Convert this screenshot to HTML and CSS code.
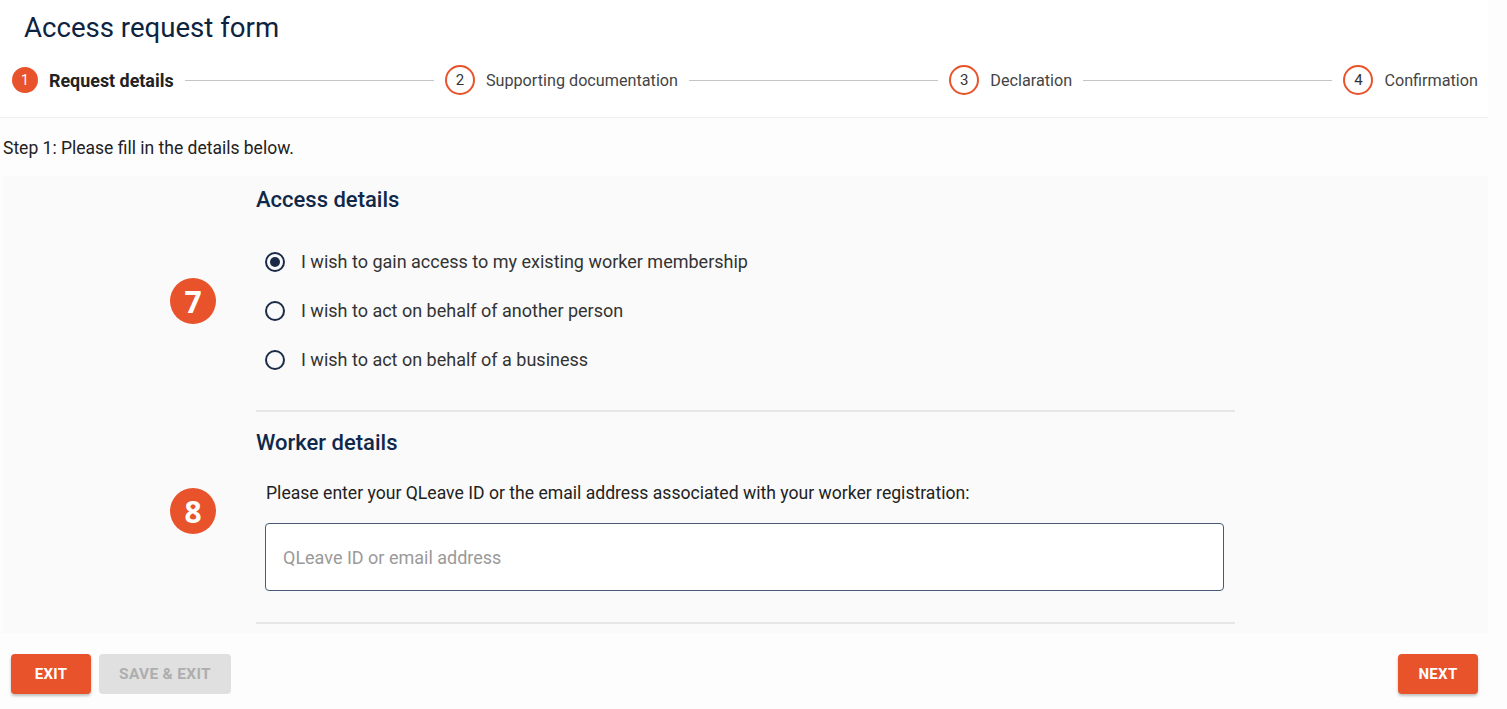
FILE: index.html
```html
<!DOCTYPE html>
<html lang="en">
<head>
<meta charset="utf-8">
<title>Access request form</title>
<link rel="stylesheet" href="styles.css">
</head>
<body>
<div class="page">
  <header class="top">
    <h1 class="title">Access request form</h1>
    <ol class="stepper">
      <li class="step active"><span class="num">1</span><span class="label">Request details</span></li>
      <li class="connector"></li>
      <li class="step"><span class="num">2</span><span class="label">Supporting documentation</span></li>
      <li class="connector"></li>
      <li class="step"><span class="num">3</span><span class="label">Declaration</span></li>
      <li class="connector"></li>
      <li class="step"><span class="num">4</span><span class="label">Confirmation</span></li>
    </ol>
  </header>

  <p class="intro">Step 1: Please fill in the details below.</p>

  <main class="form-area">
    <section class="section s-access">
      <div class="badge b7">7</div>
      <div class="content">
        <h2 class="heading">Access details</h2>
        <div class="radios">
          <label class="radio"><span class="dot checked"></span><span>I wish to gain access to my existing worker membership</span></label>
          <label class="radio"><span class="dot"></span><span>I wish to act on behalf of another person</span></label>
          <label class="radio"><span class="dot"></span><span>I wish to act on behalf of a business</span></label>
        </div>
        <hr class="divider">
      </div>
    </section>
    <section class="section s-worker">
      <div class="badge b8">8</div>
      <div class="content">
        <h2 class="heading heading2">Worker details</h2>
        <p class="hint">Please enter your QLeave ID or the email address associated with your worker registration:</p>
        <div class="input"><span class="placeholder">QLeave ID or email address</span></div>
        <hr class="divider divider2">
      </div>
    </section>
  </main>

  <footer class="actions">
    <div class="left">
      <button class="btn primary">EXIT</button>
      <button class="btn disabled">SAVE &amp; EXIT</button>
    </div>
    <button class="btn primary">NEXT</button>
  </footer>
</div>
</body>
</html>
```

FILE: styles.css
```css
* { box-sizing: border-box; }
html, body { margin: 0; padding: 0; }
body {
  background: #fdfdfd;
  font-family: Roboto, "Liberation Sans", Arial, sans-serif;
  color: #2b2b2b;
  width: 1507px;
  height: 709px;
  overflow: hidden;
}
.page { width: 1488px; }

.top {
  background: #ffffff;
  border-bottom: 1px solid #eeeeee;
  height: 118px;
  padding-top: 11px;
}
.title {
  margin: 0 0 0 24px;
  font-size: 27.6px;
  line-height: 34px;
  font-weight: 400;
  color: #0d2340;
}
.stepper {
  list-style: none;
  margin: 20px 0 0 0;
  padding: 0 10px 0 12px;
  display: flex;
  align-items: center;
  height: 30px;
}
.step {
  display: flex;
  align-items: center;
  gap: 11px;
  font-size: 16.2px;
  color: #444;
}
.step .num {
  width: 30px;
  height: 30px;
  border-radius: 50%;
  border: 2px solid #e9532b;
  display: flex;
  align-items: center;
  justify-content: center;
  font-size: 15px;
  color: #333;
}
.step.active .num {
  width: 26px;
  height: 26px;
  background: #e9532b;
  color: #fff;
  border: none;
  font-size: 14px;
}
.step.active .label { font-weight: 700; color: #222; font-size: 17.9px; }
.connector {
  flex: 1;
  height: 1px;
  background: #c4c4c4;
  margin: 0 11px;
}

.intro {
  margin: 18px 0 0 3px;
  font-size: 17.5px;
  line-height: 24px;
  color: #222;
}

.form-area {
  margin: 16px 0 0 2px;
  width: 1486px;
  background: #fafafa;
  padding-bottom: 9px;
}
.section {
  display: grid;
  grid-template-columns: 254px 979px;
}
.badge {
  justify-self: end;
  margin-right: 40px;
  width: 46px;
  height: 46px;
  border-radius: 50%;
  background: #e9532b;
  color: #fff;
  font-family: "Open Sans", Roboto, sans-serif;
  font-weight: 700;
  font-size: 30px;
  display: flex;
  align-items: center;
  justify-content: center;
}
.b7 { margin-top: 102px; }
.b8 { margin-top: 76px; }

.heading {
  margin: 0;
  font-size: 22px;
  line-height: 28px;
  font-weight: 500;
  color: #10284a;
  padding-top: 10px;
}
.heading2 { padding-top: 17px; }

.radios {
  margin-top: 23px;
  display: flex;
  flex-direction: column;
}
.radio {
  height: 49px;
  display: flex;
  align-items: center;
  gap: 16px;
  padding-left: 9px;
  font-size: 18px;
  color: #333;
}
.dot {
  width: 20px;
  height: 20px;
  border-radius: 50%;
  border: 2px solid #1b2b47;
  display: flex;
  align-items: center;
  justify-content: center;
}
.dot.checked::after {
  content: "";
  width: 10px;
  height: 10px;
  border-radius: 50%;
  background: #1b2b47;
}
.divider {
  margin: 26px 0 0 0;
  border: none;
  height: 2px;
  background: #e6e6e6;
}

.hint {
  margin: 24px 0 0 10px;
  font-size: 17.6px;
  line-height: 24px;
  color: #222;
}
.input {
  margin: 18px 0 0 9px;
  width: 959px;
  height: 68px;
  background: #fff;
  border: 1.5px solid #4a5a74;
  border-radius: 4px;
  display: flex;
  align-items: center;
  padding-left: 17px;
}
.placeholder {
  font-size: 18px;
  color: #9a9a9a;
}
.divider2 { margin-top: 31px; }

.actions {
  margin-top: 21px;
  display: flex;
  justify-content: space-between;
  padding: 0 10px 0 11px;
}
.left { display: flex; gap: 8px; }
.btn {
  height: 40px;
  border: none;
  border-radius: 4px;
  font-family: Roboto, "Liberation Sans", sans-serif;
  font-size: 15px;
  font-weight: 700;
  letter-spacing: 0.3px;
  padding: 0;
}
.btn.primary {
  width: 80px;
  background: #e9532b;
  color: #fff;
  box-shadow: 0 2px 3px rgba(0,0,0,0.25);
}
.btn.disabled {
  width: 132px;
  background: #e0e0e0;
  color: #aeaeae;
  font-size: 15.5px;
}
```
